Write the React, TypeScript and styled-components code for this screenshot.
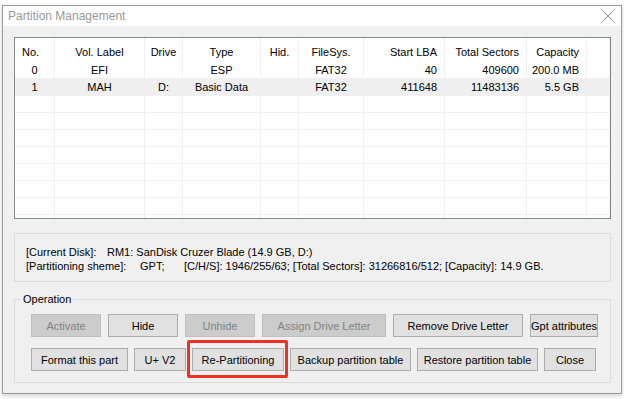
import React from 'react';
import styled, { createGlobalStyle } from 'styled-components';

interface IPartition {
  no: string;
  label: string;
  drive: string;
  type: string;
  hidden: string;
  fs: string;
  startLba: string;
  totalSectors: string;
  capacity: string;
}

type Align = 'left' | 'center' | 'right';

interface IColumn {
  key: keyof IPartition | null;
  title: string;
  width: string;
  head: Align;
  body: Align;
}

const COLUMNS: IColumn[] = [
  { key: 'no', title: 'No.', width: '40px', head: 'left', body: 'center' },
  { key: 'label', title: 'Vol. Label', width: '90px', head: 'center', body: 'center' },
  { key: 'drive', title: 'Drive', width: '38px', head: 'center', body: 'center' },
  { key: 'type', title: 'Type', width: '78px', head: 'center', body: 'center' },
  { key: 'hidden', title: 'Hid.', width: '38px', head: 'center', body: 'center' },
  { key: 'fs', title: 'FileSys.', width: '65px', head: 'center', body: 'center' },
  { key: 'startLba', title: 'Start LBA', width: '81px', head: 'right', body: 'right' },
  { key: 'totalSectors', title: 'Total Sectors', width: '82px', head: 'right', body: 'right' },
  { key: 'capacity', title: 'Capacity', width: '60px', head: 'right', body: 'right' },
  { key: null, title: '', width: '1fr', head: 'left', body: 'left' },
];

const PARTITIONS: IPartition[] = [
  { no: '0', label: 'EFI', drive: '', type: 'ESP', hidden: '', fs: 'FAT32', startLba: '40', totalSectors: '409600', capacity: '200.0 MB' },
  { no: '1', label: 'MAH', drive: 'D:', type: 'Basic Data', hidden: '', fs: 'FAT32', startLba: '411648', totalSectors: '11483136', capacity: '5.5 GB' },
];

const EMPTY_ROWS = 8;
const GRID = COLUMNS.map((c) => c.width).join(' ');

const GlobalStyle = createGlobalStyle`
  html, body {
    margin: 0;
    padding: 0;
    background: #ffffff;
    font-family: "Liberation Sans", Arial, sans-serif;
    font-size: 11px;
    color: #000000;
  }
`;

const Page = styled.div`
  width: 624px;
  height: 399px;
  overflow: hidden;
  background: #ffffff;
  padding-top: 5px;
  box-sizing: border-box;
`;

const Window = styled.div`
  box-sizing: border-box;
  margin-left: 2px;
  width: 620px;
  border: 1px solid #9a9a9a;
  background: #f0f0f0;
  box-shadow: 0 2px 5px rgba(0, 0, 0, 0.18);
`;

const TitleBar = styled.div`
  height: 20px;
  display: flex;
  align-items: center;
  justify-content: space-between;
  padding: 0 7px 0 5px;
  background: #ffffff;
  color: #999999;
  font-size: 12px;
`;

const Body = styled.div`
  padding: 11px 10px 10px 11px;
  display: flex;
  flex-direction: column;
`;

const ListView = styled.div`
  box-sizing: border-box;
  height: 182px;
  border: 1px solid #828790;
  background: #ffffff;
  overflow: hidden;
`;

const ListRow = styled.div<{ $header?: boolean; $selected?: boolean }>`
  display: grid;
  grid-template-columns: ${GRID};
  height: ${({ $header }) => ($header ? '24px' : '17px')};
  background: ${({ $selected }) => ($selected ? '#efefef' : '#ffffff')};
`;

const Cell = styled.div<{ $align: Align; $header?: boolean }>`
  box-sizing: border-box;
  display: flex;
  align-items: center;
  justify-content: ${({ $align }) =>
    $align === 'left' ? 'flex-start' : $align === 'right' ? 'flex-end' : 'center'};
  padding: ${({ $header }) => ($header ? '3px 7px 0' : '0 7px')};
  border-right: 1px solid #f0f0f0;
  border-bottom: ${({ $header }) => ($header ? 'none' : '1px solid #f0f0f0')};
  white-space: nowrap;
  overflow: hidden;
`;

const InfoPanel = styled.div`
  box-sizing: border-box;
  margin-top: 14px;
  height: 49px;
  border: 1px solid #dcdcdc;
  padding: 11px 11px 0;
  line-height: 14px;
`;

const InfoLine = styled.div`
  display: flex;
  white-space: nowrap;
`;

const InfoKey = styled.span<{ $width: number }>`
  display: inline-block;
  flex: none;
  width: ${({ $width }) => $width}px;
`;

const Group = styled.fieldset`
  margin: 10px 0 0;
  padding: 8px 0 11px 16px;
  border: 1px solid #dcdcdc;
  display: flex;
  flex-direction: column;
  gap: 11px;
`;

const Legend = styled.legend`
  margin-left: -10px;
  padding: 0 2px;
  line-height: 14px;
`;

const ButtonRow = styled.div<{ $gap: number }>`
  display: flex;
  gap: ${({ $gap }) => $gap}px;
`;

const Button = styled.button<{ $width: number }>`
  box-sizing: border-box;
  width: ${({ $width }) => $width}px;
  height: 23px;
  padding: 0;
  display: flex;
  align-items: center;
  justify-content: center;
  overflow: hidden;
  white-space: nowrap;
  font-family: "Liberation Sans", Arial, sans-serif;
  font-size: 11px;
  color: #000000;
  background: #e1e1e1;
  border: 1px solid #adadad;
  border-radius: 0;

  &:disabled {
    color: #838383;
    background: #cccccc;
    border-color: #bfbfbf;
  }
`;

const Highlight = styled.span`
  position: relative;
  display: inline-flex;

  &::after {
    content: '';
    position: absolute;
    top: -8px;
    left: -5px;
    right: -4px;
    bottom: -7px;
    border: 3px solid #ec3323;
    border-radius: 2px;
    pointer-events: none;
  }
`;

const CloseIcon = () => (
  <svg width="12" height="12" viewBox="0 0 12 12">
    <path d="M0.5 0.5 L11.5 11.5 M11.5 0.5 L0.5 11.5" stroke="#8a8a8a" strokeWidth="1" />
  </svg>
);

const App: React.FC = () => {
  return (
    <Page>
      <GlobalStyle />
      <Window>
        <TitleBar>
          <span>Partition Management</span>
          <CloseIcon />
        </TitleBar>

        <Body>
          <ListView>
            <ListRow $header>
              {COLUMNS.map((col, i) => (
                <Cell key={i} $align={col.head} $header>
                  {col.title}
                </Cell>
              ))}
            </ListRow>
            {PARTITIONS.map((p, r) => (
              <ListRow key={p.no} $selected={r === 1}>
                {COLUMNS.map((col, i) => (
                  <Cell key={i} $align={col.body}>
                    {col.key ? p[col.key] : ''}
                  </Cell>
                ))}
              </ListRow>
            ))}
            {Array.from({ length: EMPTY_ROWS }).map((_, r) => (
              <ListRow key={`empty-${r}`}>
                {COLUMNS.map((col, i) => (
                  <Cell key={i} $align={col.body} />
                ))}
              </ListRow>
            ))}
          </ListView>

          <InfoPanel>
            <InfoLine>
              <InfoKey $width={81}>[Current Disk]:</InfoKey>
              <span>RM1: SanDisk Cruzer Blade (14.9 GB, D:)</span>
            </InfoLine>
            <InfoLine>
              <InfoKey $width={114}>[Partitioning sheme]:</InfoKey>
              <InfoKey $width={44}>GPT;</InfoKey>
              <span>[C/H/S]: 1946/255/63; [Total Sectors]: 31266816/512; [Capacity]: 14.9 GB.</span>
            </InfoLine>
          </InfoPanel>

          <Group>
            <Legend>Operation</Legend>
            <ButtonRow $gap={7}>
              <Button $width={70} disabled>Activate</Button>
              <Button $width={70}>Hide</Button>
              <Button $width={70} disabled>Unhide</Button>
              <Button $width={124} disabled>Assign Drive Letter</Button>
              <Button $width={130}>Remove Drive Letter</Button>
              <Button $width={68}>Gpt attributes</Button>
            </ButtonRow>
            <ButtonRow $gap={6}>
              <Button $width={97}>Format this part</Button>
              <Button $width={52}>U+ V2</Button>
              <Highlight>
                <Button $width={92}>Re-Partitioning</Button>
              </Highlight>
              <Button $width={121}>Backup partition table</Button>
              <Button $width={121}>Restore partition table</Button>
              <Button $width={52}>Close</Button>
            </ButtonRow>
          </Group>
        </Body>
      </Window>
    </Page>
  );
};

export default App;
